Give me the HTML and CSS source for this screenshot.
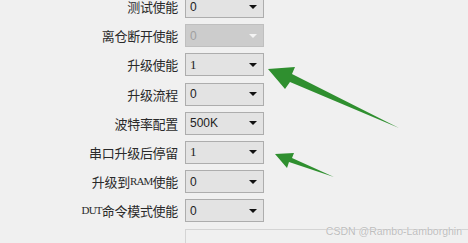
FILE: index.html
```html
<!DOCTYPE html>
<html lang="zh-CN">
<head>
    <meta charset="UTF-8">
    <meta name="viewport" content="width=device-width, initial-scale=1.0">
    <title>升级配置</title>
    <link rel="stylesheet" href="styles.css">
</head>
<body>

    <div class="form">
        <label class="label">测试使能</label>
        <div class="combo"><span class="value">0</span><span class="caret"></span></div>

        <label class="label">离仓断开使能</label>
        <div class="combo disabled"><span class="value">0</span><span class="caret"></span></div>

        <label class="label">升级使能</label>
        <div class="combo"><span class="value serif">1</span><span class="caret"></span></div>

        <label class="label">升级流程</label>
        <div class="combo"><span class="value">0</span><span class="caret"></span></div>

        <label class="label">波特率配置</label>
        <div class="combo"><span class="value">500K</span><span class="caret"></span></div>

        <label class="label">串口升级后停留</label>
        <div class="combo"><span class="value serif">1</span><span class="caret"></span></div>

        <label class="label">升级到<span class="ram">RAM</span>使能</label>
        <div class="combo"><span class="value">0</span><span class="caret"></span></div>

        <label class="label"><span class="ram">DUT</span>命令模式使能</label>
        <div class="combo"><span class="value">0</span><span class="caret"></span></div>

        <span></span>
        <div class="panel"></div>
    </div>

    <svg class="arrows" width="468" height="243" viewBox="0 0 468 243">
        <polygon points="268,69 295,67 292,74 399,128 290,82 285,89" fill="#2f8f2f"/>
        <polygon points="275,154 294,153 292,158 334,177 289,162 287,168" fill="#2f8f2f"/>
    </svg>

    <div class="watermark">CSDN @Rambo-Lamborghin</div>

</body>
</html>
```

FILE: styles.css
```css
body {
    margin: 0;
    background-color: #f0f0f0;
    width: 468px;
    height: 243px;
    overflow: hidden;
    position: relative;
    font-family: "Noto Sans CJK SC", "DejaVu Sans", sans-serif;
}

.form {
    display: grid;
    grid-template-columns: 178px 79px;
    grid-auto-rows: 23px;
    column-gap: 7px;
    row-gap: 6.2px;
    margin-top: -5px;
}

.label {
    display: flex;
    align-items: center;
    justify-content: flex-end;
    font-size: 13px;
    line-height: 13px;
    color: #2a2a2a;
    letter-spacing: -0.3px;
}

.ram {
    font-family: "Liberation Serif", serif;
    font-size: 11px;
    letter-spacing: -0.8px;
}

.combo {
    display: flex;
    align-items: center;
    justify-content: space-between;
    box-sizing: border-box;
    border: 1px solid #adadad;
    background-color: #e3e3e3;
    padding: 0 6px 0 4px;
    font-family: "Liberation Sans", sans-serif;
    font-size: 12px;
    color: #222;
}

.combo .serif {
    font-family: "Liberation Serif", serif;
    font-size: 13px;
}

.caret {
    width: 0;
    height: 0;
    border-left: 4px solid transparent;
    border-right: 4px solid transparent;
    border-top: 4px solid #111;
}

.combo.disabled {
    background-color: #cccccc;
    border-color: #bfbfbf;
    color: #a0a0a0;
}

.combo.disabled .caret {
    border-top-color: #f4f4f4;
}

.panel {
    width: 283px;
    height: 15px;
    box-sizing: border-box;
    border: 1px solid #d4d4d4;
    border-right: none;
    border-bottom: none;
    background-color: #f0f0f0;
}

.arrows {
    position: absolute;
    left: 0;
    top: 0;
}

.watermark {
    position: absolute;
    right: 6px;
    top: 225px;
    font-family: "Liberation Sans", sans-serif;
    font-size: 10.5px;
    color: #bdbdbd;
    text-shadow: 0 0 1px #fff;
}
```
